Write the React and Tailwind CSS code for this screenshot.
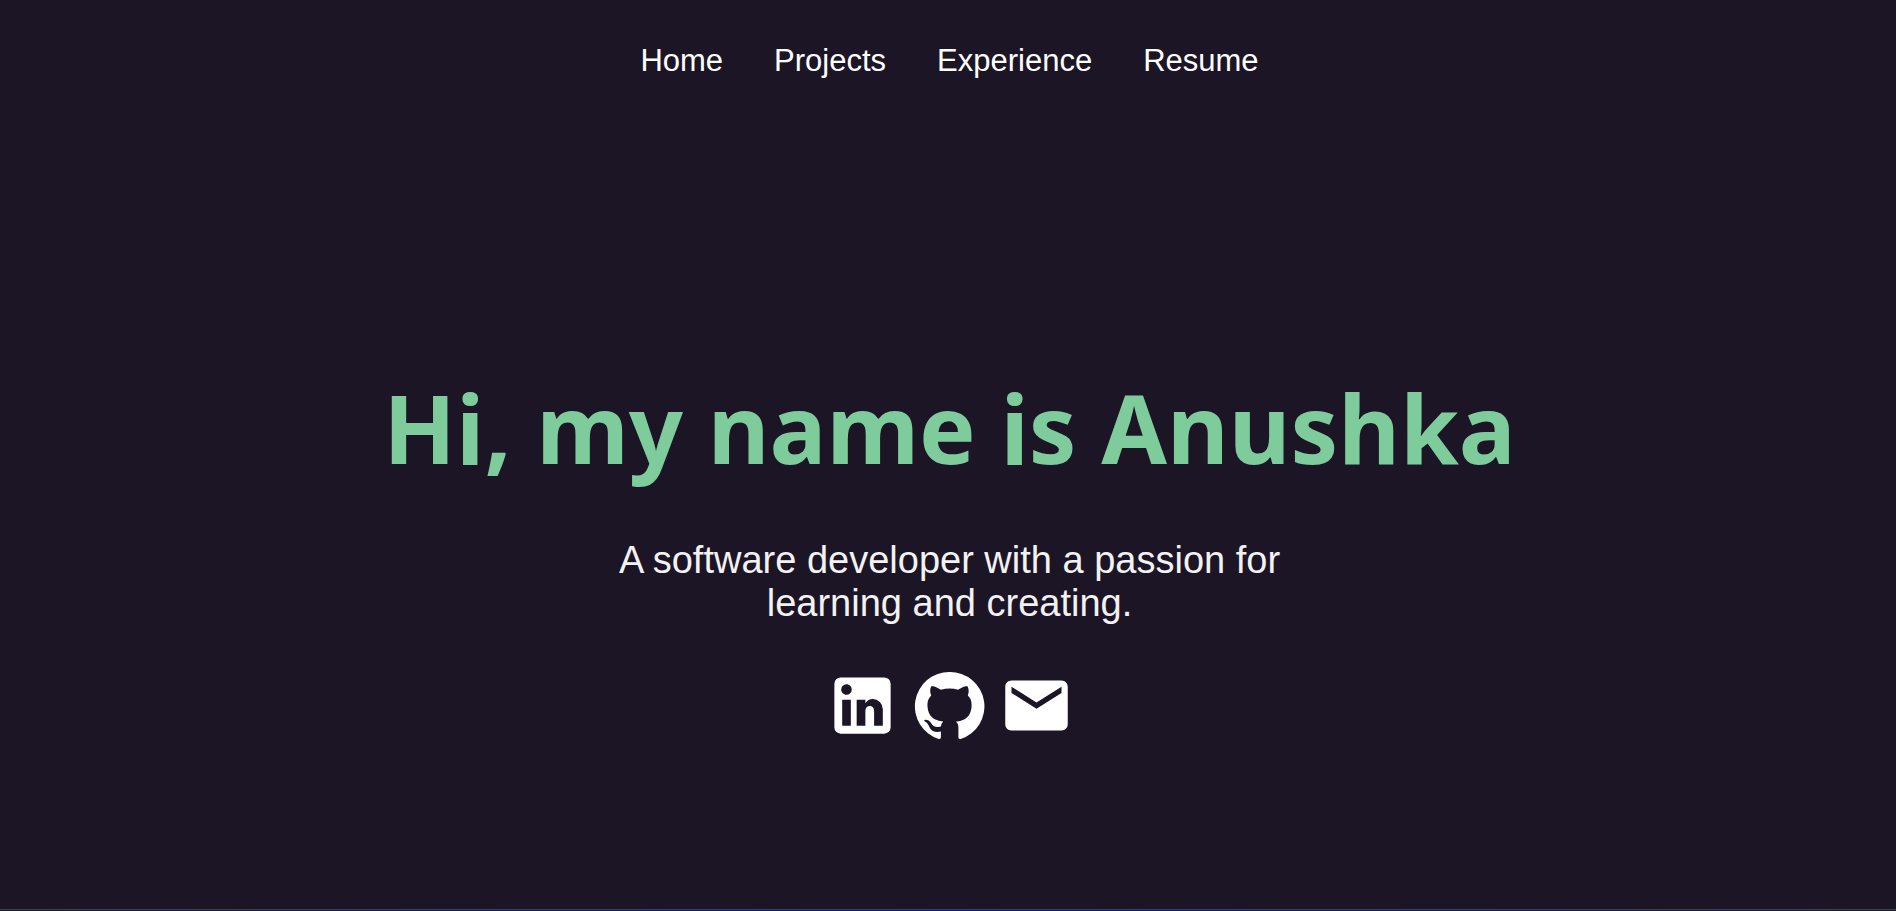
const navLinks = [
  { label: "Home", href: "#home" },
  { label: "Projects", href: "#projects" },
  { label: "Experience", href: "#experience" },
  { label: "Resume", href: "#resume" },
];

const socials = [
  {
    label: "LinkedIn",
    href: "#linkedin",
    path: "M19 3a2 2 0 0 1 2 2v14a2 2 0 0 1-2 2H5a2 2 0 0 1-2-2V5a2 2 0 0 1 2-2h14m-.5 15.5v-5.3a3.26 3.26 0 0 0-3.26-3.26c-.85 0-1.84.52-2.32 1.3v-1.11h-2.79v8.37h2.79v-4.93c0-.77.62-1.4 1.39-1.4a1.4 1.4 0 0 1 1.4 1.4v4.93h2.79M6.88 8.56a1.68 1.68 0 0 0 1.68-1.68c0-.93-.75-1.69-1.68-1.69a1.69 1.69 0 0 0-1.69 1.69c0 .93.76 1.68 1.69 1.68m1.39 9.94v-8.37H5.5v8.37h2.77z",
  },
  {
    label: "GitHub",
    href: "#github",
    path: "M12 1.27a11 11 0 00-3.48 21.46c.55.09.73-.28.73-.55v-1.84c-3.03.64-3.67-1.46-3.67-1.46-.55-1.29-1.28-1.65-1.28-1.65-.92-.65.1-.65.1-.65 1.1 0 1.73 1.1 1.73 1.1.92 1.65 2.57 1.2 3.21.92a2 2 0 01.64-1.47c-2.47-.27-5.04-1.19-5.04-5.5 0-1.1.46-2.1 1.2-2.84a3.76 3.76 0 010-2.93s.91-.28 3.11 1.1c1.8-.49 3.7-.49 5.5 0 2.1-1.38 3.02-1.1 3.02-1.1a3.76 3.76 0 01.1 2.93c.83.74 1.2 1.74 1.2 2.94 0 4.21-2.57 5.13-5.04 5.4.45.37.82.92.82 2.02v3.03c0 .27.1.64.73.55A11 11 0 0012 1.27",
  },
  {
    label: "Email",
    href: "#email",
    path: "M20 4H4c-1.1 0-1.99.9-1.99 2L2 18c0 1.1.9 2 2 2h16c1.1 0 2-.9 2-2V6c0-1.1-.9-2-2-2zm0 4l-8 5-8-5V6l8 5 8-5v2z",
  },
];

export default function App() {
  return (
    <div className="flex min-h-screen flex-col bg-[#1c1526] font-['Liberation_Sans',Arial,sans-serif] text-white">
      <nav className="flex flex-wrap justify-center gap-x-[51px] gap-y-3 pt-[41px] pr-6 pl-[27px] text-[31px] leading-10">
        {navLinks.map((link) => (
          <a key={link.label} href={link.href}>
            {link.label}
          </a>
        ))}
      </nav>

      <main className="flex grow flex-col items-center justify-center pt-[194px] pr-6 pb-20 pl-[27px] text-center">
        <h1 className="font-['Noto_Sans','Segoe_UI',sans-serif] text-[95px] leading-[132px] font-bold text-[#7ecb9c]">
          Hi, my name is Anushka
        </h1>
        <p className="mt-[46px] max-w-[700px] text-[38px] leading-[43px] text-[#f2f2f2]">
          A software developer with a passion for learning and creating.
        </p>
        <div className="mt-[43px] flex gap-3">
          {socials.map((item) => (
            <a key={item.label} href={item.href} aria-label={item.label}>
              <svg viewBox="0 0 24 24" fill="currentColor" className="size-[75px]" aria-hidden="true">
                <path d={item.path} />
              </svg>
            </a>
          ))}
        </div>
      </main>

      <footer>
        <div className="h-px bg-linear-to-r from-[#3c4048] via-[#333f70] to-[#3c4048]" />
        <div className="h-px bg-linear-to-r from-[#1c1a26] via-[#0c1a7a] to-[#1c1a26]" />
      </footer>
    </div>
  );
}
